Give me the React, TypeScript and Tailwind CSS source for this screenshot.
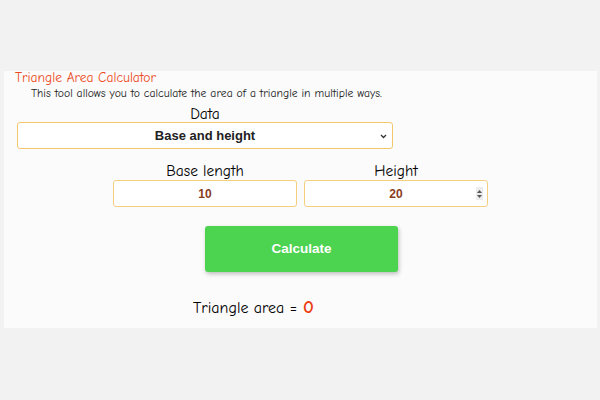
import React from "react";

const comic = { fontFamily: '"Comic Sans MS", "Comic Neue", "DejaVu Sans", sans-serif' };

export default function App() {
  return (
    <div className="w-[600px] h-[400px] bg-[#f2f2f2] pt-[71px] px-[4px] font-['Liberation_Sans',Arial,sans-serif]">
      <div className="w-[593px] h-[257px] bg-[#fbfbfb] flex flex-col" style={comic}>
        <div className="pl-[11px] text-[13.6px] leading-[14px] text-[#ec4a1c]">Triangle Area Calculator</div>
        <div className="pl-[27px] text-[11.7px] leading-[14px] text-[#222] mt-[1px]">
          This tool allows you to calculate the area of a triangle in multiple ways.
        </div>
        <div className="w-[376px] ml-[13px] mt-[6px] text-center text-[15.5px] leading-[16px] text-black">Data</div>
        <div className="w-[376px] ml-[13px] h-[27px] border border-[#f4c76c] rounded-[3px] bg-white flex items-center relative">
          <span className="flex-1 text-center font-['Liberation_Sans',Arial,sans-serif] font-bold text-[13px] text-[#222]">Base and height</span>
          <svg className="absolute right-[5px] top-[11px]" width="7" height="5" viewBox="0 0 7 5">
            <path d="M1 1l2.5 2.5L6 1" fill="none" stroke="#333" strokeWidth="1.3" />
          </svg>
        </div>
        <div className="flex ml-[109px] mt-[13px] gap-[7px]">
          {[
            ["Base length", "10", false],
            ["Height", "20", true],
          ].map(([label, val, spin]) => (
            <div key={label as string} className="w-[184px] flex flex-col">
              <div className="text-center text-[15.5px] leading-[18px] text-black">{label}</div>
              <div className="h-[27px] border border-[#f5cf7f] rounded-[3px] bg-white flex items-center relative">
                <span className="flex-1 text-center font-['Liberation_Sans',Arial,sans-serif] font-bold text-[12px] text-[#8a3d1c]">{val}</span>
                {spin && (
                  <div className="absolute right-[4px] top-[6px] w-[7px] h-[13px] bg-[#ececec] flex flex-col items-center justify-center gap-[2px]">
                    <svg width="5" height="3" viewBox="0 0 5 3"><path d="M0 3L2.5 0L5 3z" fill="#555" /></svg>
                    <svg width="5" height="3" viewBox="0 0 5 3"><path d="M0 0L2.5 3L5 0z" fill="#555" /></svg>
                  </div>
                )}
              </div>
            </div>
          ))}
        </div>
        <div className="ml-[201px] mt-[19px] w-[193px] h-[46px] bg-[#4cd350] rounded-[3px] shadow-[1px_2px_4px_rgba(0,0,0,0.25)] flex items-center justify-center font-['Liberation_Sans',Arial,sans-serif] font-bold text-[13.5px] text-white">
          Calculate
        </div>
        <div className="ml-[189px] mt-[24px] flex items-baseline leading-[22px] text-[16px] text-black">
          <span>Triangle area =</span>
          <span className="ml-[6px] text-[19px] font-bold text-[#ec3d14]">0</span>
        </div>
      </div>
    </div>
  );
}
